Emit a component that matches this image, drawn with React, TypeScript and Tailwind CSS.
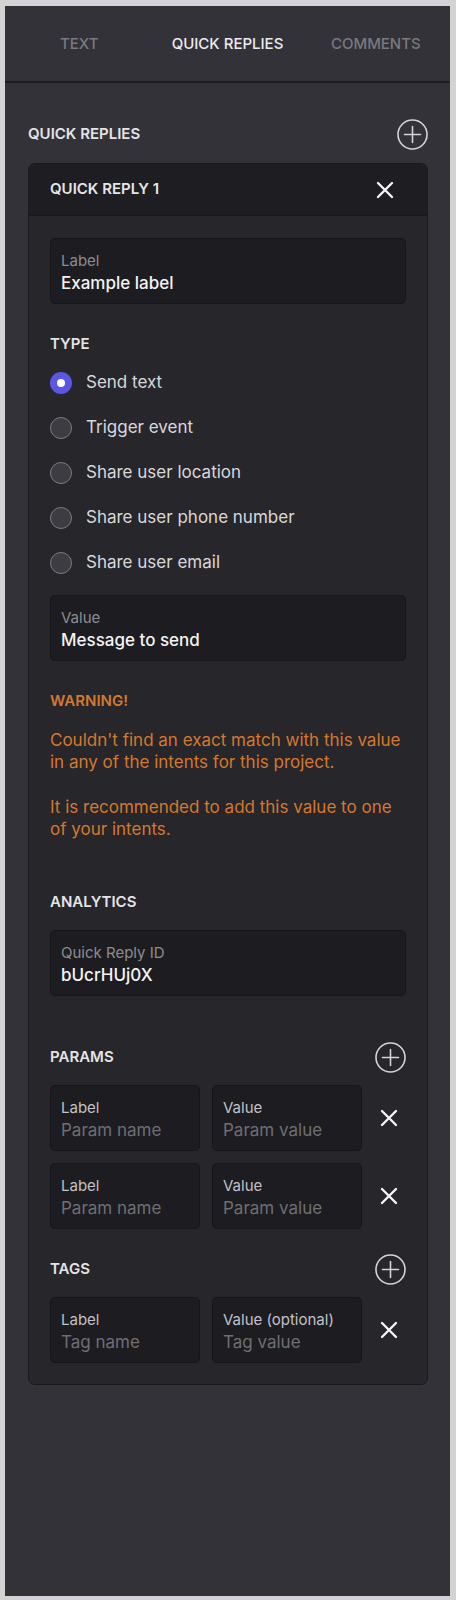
import React, { useState } from 'react';

const font = { fontFamily: 'Inter, "Noto Sans", sans-serif' };

const PlusCircle = () => (
  <svg width="31" height="31" viewBox="0 0 31 31" fill="none">
    <circle cx="15.5" cy="15.5" r="14.5" stroke="#d4d4d6" strokeWidth="1.6" />
    <path d="M15.5 7.5v16M7.5 15.5h16" stroke="#d4d4d6" strokeWidth="1.6" strokeLinecap="round" />
  </svg>
);

const CloseX = () => (
  <svg width="18" height="18" viewBox="0 0 18 18" fill="none">
    <path d="M2 2l14 14M16 2L2 16" stroke="#f4f4f5" strokeWidth="2.4" strokeLinecap="round" />
  </svg>
);

const Field = ({ label, value, placeholder, bright }: { label: string; value?: string; placeholder?: string; bright?: boolean }) => (
  <div className="h-[66px] w-full rounded-[5px] border border-[#161519] bg-[#1d1c20] px-[10px] pt-[12px]">
    <div className={`text-[15px] leading-[20px] ${bright ? 'text-[#c3c2c7]' : 'text-[#8d8c92]'}`}>{label}</div>
    {value ? (
      <div className="text-[17px] font-medium leading-[24px] text-[#f3f3f4]">{value}</div>
    ) : (
      <div className="text-[17px] leading-[24px] text-[#6f6e74]">{placeholder}</div>
    )}
  </div>
);

const PairRow = ({ a, b, pa, pb }: { a: string; b: string; pa: string; pb: string }) => (
  <div className="flex items-center">
    <div className="w-[150px]">
      <Field label={a} placeholder={pa} bright />
    </div>
    <div className="ml-[12px] w-[150px]">
      <Field label={b} placeholder={pb} bright />
    </div>
    <div className="ml-[10px] flex flex-1 justify-center">
      <CloseX />
    </div>
  </div>
);

const SectionHead = ({ title, plus }: { title: string; plus?: boolean }) => (
  <div className="flex h-[31px] items-center justify-between">
    <span className="text-[15px] font-semibold text-[#e4e4e6]">{title}</span>
    {plus && <PlusCircle />}
  </div>
);

const options = ['Send text', 'Trigger event', 'Share user location', 'Share user phone number', 'Share user email'];

export default function App() {
  const [selected, setSelected] = useState(0);
  const tabs = ['TEXT', 'QUICK REPLIES', 'COMMENTS'];

  return (
    <div className="h-[1600px] w-[456px] bg-[#d3d3d3] pl-[5px] pr-[6px] pt-[6px] pb-[4px]" style={font}>
      <div className="flex h-full flex-col bg-[#333238]">
        <div className="flex h-[77px] items-center border-b-2 border-[#1c1b1f] pt-[2px]">
          {tabs.map((t, i) => (
            <div
              key={t}
              className={`flex-1 text-center text-[15px] font-medium ${i === 1 ? 'text-[#ececee]' : 'text-[#7a797f]'}`}
            >
              {t}
            </div>
          ))}
        </div>

        <div className="pl-[23px] pr-[22px] pt-[36px]">
          <SectionHead title="QUICK REPLIES" plus />

          <div className="mt-[13px] overflow-hidden rounded-[7px] border border-[#1a191d] bg-[#27262b]">
            <div className="flex h-[52px] items-center justify-between border-b border-[#17161a] bg-[#1e1d22] pl-[21px] pr-[33px]">
              <span className="text-[15px] font-semibold text-[#e6e6e8]">QUICK REPLY 1</span>
              <CloseX />
            </div>

            <div className="px-[21px] pt-[22px] pb-[21px]">
              <Field label="Label" value="Example label" />

              <div className="mt-[30px] text-[15px] font-semibold leading-[20px] text-[#e4e4e6]">TYPE</div>
              <div className="mt-[6px] flex flex-col">
                {options.map((o, i) => (
                  <div key={o} className="flex h-[45px] cursor-pointer items-center" onClick={() => setSelected(i)}>
                    {i === selected ? (
                      <div className="flex h-[22px] w-[22px] items-center justify-center rounded-full bg-[#5a57e4]">
                        <div className="h-[8px] w-[8px] rounded-full bg-white" />
                      </div>
                    ) : (
                      <div className="h-[22px] w-[22px] rounded-full border-[1.5px] border-[#7c7b81] bg-[#3d3c42]" />
                    )}
                    <span className="ml-[14px] text-[17px] text-[#d8d8db]">{o}</span>
                  </div>
                ))}
              </div>

              <div className="mt-[10px]">
                <Field label="Value" value="Message to send" />
              </div>

              <div className="mt-[30px] text-[15px] font-semibold leading-[20px] text-[#d5782f]">WARNING!</div>
              <p className="mt-[18px] text-[17px] leading-[22px] text-[#d5782f]">
                Couldn't find an exact match with this value in any of the intents for this project.
              </p>
              <p className="mt-[23px] text-[17px] leading-[22px] text-[#d5782f]">
                It is recommended to add this value to one of your intents.
              </p>

              <div className="mt-[52px] text-[15px] font-semibold leading-[20px] text-[#e4e4e6]">ANALYTICS</div>
              <div className="mt-[18px]">
                <Field label="Quick Reply ID" value="bUcrHUj0X" />
              </div>

              <div className="mt-[46px]">
                <SectionHead title="PARAMS" plus />
              </div>
              <div className="mt-[12px] flex flex-col gap-[12px]">
                <PairRow a="Label" b="Value" pa="Param name" pb="Param value" />
                <PairRow a="Label" b="Value" pa="Param name" pb="Param value" />
              </div>

              <div className="mt-[25px]">
                <SectionHead title="TAGS" plus />
              </div>
              <div className="mt-[12px]">
                <PairRow a="Label" b="Value (optional)" pa="Tag name" pb="Tag value" />
              </div>
            </div>
          </div>
        </div>
      </div>
    </div>
  );
}
